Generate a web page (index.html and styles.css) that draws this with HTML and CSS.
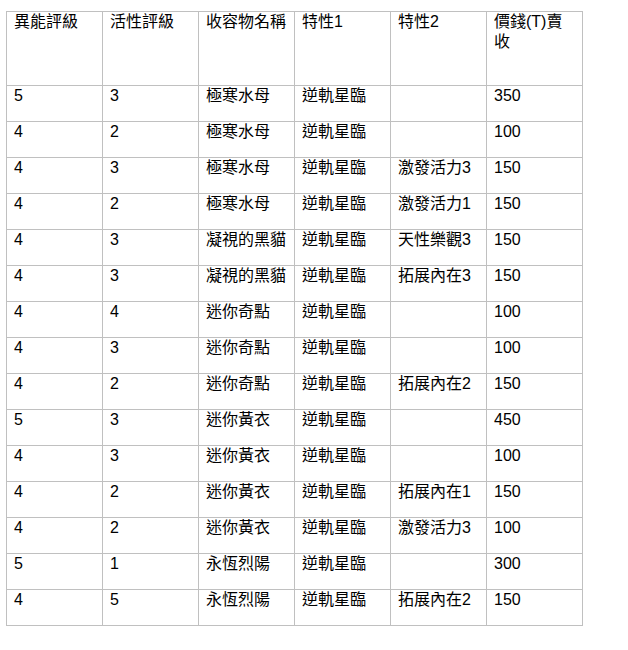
FILE: index.html
```html
<!DOCTYPE html>
<html lang="zh-Hant">
<head>
<meta charset="utf-8">
<title>收容物</title>
<link rel="stylesheet" href="styles.css">
</head>
<body>
<table class="grid">
  <tr class="head">
    <td>異能評級</td><td>活性評級</td><td>收容物名稱</td><td>特性1</td><td>特性2</td><td>價錢(T)賣收</td>
  </tr>
  <tr><td>5</td><td>3</td><td>極寒水母</td><td>逆軌星臨</td><td></td><td>350</td></tr>
  <tr><td>4</td><td>2</td><td>極寒水母</td><td>逆軌星臨</td><td></td><td>100</td></tr>
  <tr><td>4</td><td>3</td><td>極寒水母</td><td>逆軌星臨</td><td>激發活力3</td><td>150</td></tr>
  <tr><td>4</td><td>2</td><td>極寒水母</td><td>逆軌星臨</td><td>激發活力1</td><td>150</td></tr>
  <tr><td>4</td><td>3</td><td>凝視的黑貓</td><td>逆軌星臨</td><td>天性樂觀3</td><td>150</td></tr>
  <tr><td>4</td><td>3</td><td>凝視的黑貓</td><td>逆軌星臨</td><td>拓展內在3</td><td>150</td></tr>
  <tr><td>4</td><td>4</td><td>迷你奇點</td><td>逆軌星臨</td><td></td><td>100</td></tr>
  <tr><td>4</td><td>3</td><td>迷你奇點</td><td>逆軌星臨</td><td></td><td>100</td></tr>
  <tr><td>4</td><td>2</td><td>迷你奇點</td><td>逆軌星臨</td><td>拓展內在2</td><td>150</td></tr>
  <tr><td>5</td><td>3</td><td>迷你黃衣</td><td>逆軌星臨</td><td></td><td>450</td></tr>
  <tr><td>4</td><td>3</td><td>迷你黃衣</td><td>逆軌星臨</td><td></td><td>100</td></tr>
  <tr><td>4</td><td>2</td><td>迷你黃衣</td><td>逆軌星臨</td><td>拓展內在1</td><td>150</td></tr>
  <tr><td>4</td><td>2</td><td>迷你黃衣</td><td>逆軌星臨</td><td>激發活力3</td><td>100</td></tr>
  <tr><td>5</td><td>1</td><td>永恆烈陽</td><td>逆軌星臨</td><td></td><td>300</td></tr>
  <tr><td>4</td><td>5</td><td>永恆烈陽</td><td>逆軌星臨</td><td>拓展內在2</td><td>150</td></tr>
</table>
</body>
</html>
```
FILE: styles.css
```css
html, body {
  margin: 0;
  padding: 0;
  background: #ffffff;
}
body {
  font-family: "Liberation Sans", "Noto Sans CJK TC", sans-serif;
  font-size: 16px;
  color: #000000;
}
.grid {
  margin: 11px 0 0 6px;
  width: 577px;
  table-layout: fixed;
  border-collapse: collapse;
}
.grid td {
  border: 1px solid #c0c0c0;
  padding: 0 2px 0 7px;
  line-height: 20px;
  vertical-align: top;
  height: 36px;
  box-sizing: border-box;
}
.grid td:last-child {
  padding-right: 12px;
}
.grid tr.head td {
  height: 74px;
}
```
